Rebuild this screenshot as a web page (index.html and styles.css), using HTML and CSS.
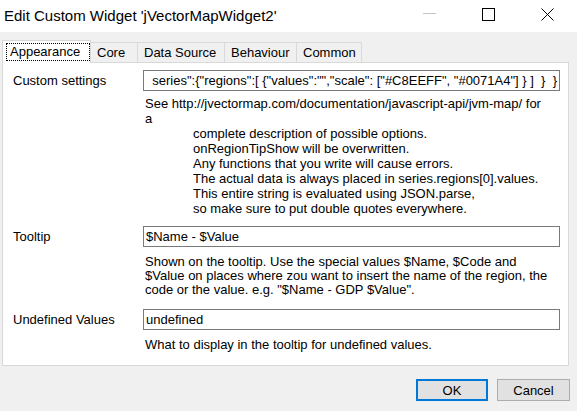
FILE: index.html
```html
<!DOCTYPE html>
<html>
<head>
<meta charset="utf-8">
<title>Edit Custom Widget</title>
<link rel="stylesheet" href="styles.css">
</head>
<body>
<div class="window">
  <header class="titlebar">
    <span class="title">Edit Custom Widget 'jVectorMapWidget2'</span>
    <div class="controls">
      <span class="ctl"><svg width="13" height="13" viewBox="0 0 13 13"><line x1="0" y1="5.5" x2="13" y2="5.5" stroke="#c4c4c4" stroke-width="1"/></svg></span>
      <span class="ctl"><svg width="13" height="13" viewBox="0 0 13 13"><rect x="0.5" y="0.5" width="12" height="12" fill="none" stroke="#000" stroke-width="1"/></svg></span>
      <span class="ctl"><svg width="13" height="13" viewBox="0 0 13 13"><path d="M0.5 0.5 L12.5 12.5 M12.5 0.5 L0.5 12.5" fill="none" stroke="#000" stroke-width="1"/></svg></span>
    </div>
  </header>

  <nav class="tabs">
    <div class="tab tab-active tab-appearance"><span class="focus">Appearance</span></div>
    <div class="tab tab-core">Core</div>
    <div class="tab tab-data">Data Source</div>
    <div class="tab tab-behaviour">Behaviour</div>
    <div class="tab tab-common">Common</div>
  </nav>

  <section class="panel">
    <label class="label">Custom settings</label>
    <div class="input input-scroll"><span>series":{"regions":[ {"values":"","scale": ["#C8EEFF", "#0071A4"] } ]&nbsp; }&nbsp; }</span></div>
    <div class="help help-custom">
      <div>See http://jvectormap.com/documentation/javascript-api/jvm-map/ for</div>
      <div>a</div>
      <div class="indent">
        <div>complete description of possible options.</div>
        <div>onRegionTipShow will be overwritten.</div>
        <div>Any functions that you write will cause errors.</div>
        <div>The actual data is always placed in series.regions[0].values.</div>
        <div>This entire string is evaluated using JSON.parse,</div>
        <div>so make sure to put double quotes everywhere.</div>
      </div>
    </div>

    <label class="label row-tooltip">Tooltip</label>
    <div class="input row-tooltip">$Name - $Value</div>
    <div class="help help-tooltip">
      <div>Shown on the tooltip. Use the special values $Name, $Code and</div>
      <div>$Value on places where zou want to insert the name of the region, the</div>
      <div>code or the value. e.g. "$Name - GDP $Value".</div>
    </div>

    <label class="label row-undefined">Undefined Values</label>
    <div class="input row-undefined">undefined</div>
    <div class="help help-undefined">
      <div>What to display in the tooltip for undefined values.</div>
    </div>
  </section>

  <footer class="buttons">
    <button class="btn btn-default">OK</button>
    <button class="btn">Cancel</button>
  </footer>
</div>
</body>
</html>
```

FILE: styles.css
```css
* {
  box-sizing: border-box;
}

html, body {
  margin: 0;
  padding: 0;
}

body {
  width: 577px;
  height: 411px;
  overflow: hidden;
  background: #f0f0f0;
  font-family: "Liberation Sans", Arial, sans-serif;
  font-size: 13px;
  color: #000;
}

.window {
  display: flex;
  flex-direction: column;
}

/* Title bar */
.titlebar {
  height: 32px;
  background: #fff;
  display: flex;
  align-items: flex-start;
}

.title {
  font-size: 15px;
  line-height: 15px;
  padding: 8px 0 0 4px;
  flex: 1;
  white-space: nowrap;
}

.controls {
  display: flex;
}

.ctl {
  width: 59px;
  height: 32px;
  display: flex;
  justify-content: center;
  align-items: flex-start;
  padding-top: 8px;
}

.ctl svg {
  display: block;
}

/* Tabs */
.tabs {
  display: flex;
  align-items: flex-end;
  height: 22px;
  margin-top: 8px;
  padding-left: 2px;
  position: relative;
  z-index: 1;
}

.tab {
  height: 20px;
  border: 1px solid #d9d9d9;
  border-bottom: none;
  background: #f0f0f0;
  padding-left: 6px;
  line-height: 19px;
  white-space: nowrap;
  margin-left: -1px;
}

.tab-active {
  height: 23px;
  margin-left: 0;
  margin-bottom: -1px;
  background: #fff;
  padding: 2px 0 0 3px;
  position: relative;
  z-index: 2;
}

.focus {
  display: block;
  width: 84px;
  height: 18px;
  border: 1px dotted #000;
  line-height: 16px;
  padding-left: 3px;
}

.tab-appearance { width: 89px; }
.tab-core { width: 48px; }
.tab-data { width: 88px; }
.tab-behaviour { width: 73px; }
.tab-common { width: 66px; }

/* Panel */
.panel {
  margin: 0 8px 0 2px;
  background: #fff;
  border: 1px solid #d9d9d9;
  padding: 7px 0 13px 10px;
  display: grid;
  grid-template-columns: 130px 417px;
  align-items: center;
}

.label {
  grid-column: 1;
  line-height: 15px;
}

.input {
  grid-column: 2;
  height: 21px;
  border: 1px solid #7a7a7a;
  padding: 0 2px;
  line-height: 19px;
  white-space: nowrap;
  overflow: hidden;
}

.input-scroll {
  display: flex;
  justify-content: flex-end;
}

.input-scroll span {
  flex: none;
}

.help {
  grid-column: 2;
  padding-left: 2px;
  white-space: nowrap;
}

.help-custom {
  line-height: 15px;
  margin-top: 5px;
}

.indent {
  padding-left: 48px;
}

.row-tooltip {
  margin-top: 10px;
}

.help-tooltip {
  line-height: 14px;
  margin-top: 8px;
}

.row-undefined {
  margin-top: 12px;
}

.help-undefined {
  line-height: 14px;
  margin-top: 8px;
}

/* Buttons */
.buttons {
  display: flex;
  justify-content: flex-end;
  gap: 9px;
  padding: 13px 7px 0 0;
}

.btn {
  height: 22px;
  width: 73px;
  background: #e1e1e1;
  border: 1px solid #adadad;
  font-family: "Liberation Sans", Arial, sans-serif;
  font-size: 13px;
  color: #000;
  padding: 0;
  margin: 0;
}

.btn-default {
  width: 72px;
  border: 2px solid #0078d7;
}
```
